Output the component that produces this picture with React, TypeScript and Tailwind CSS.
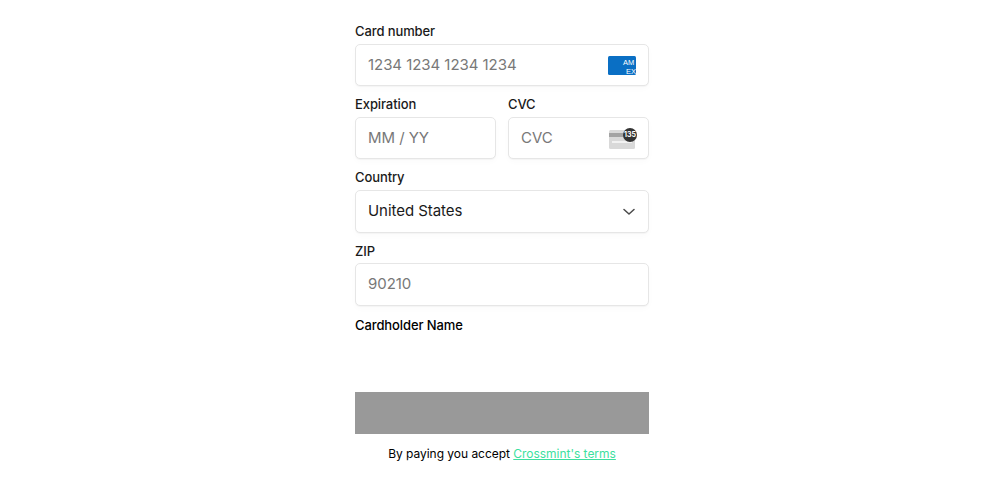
const inputClass =
  "flex items-center justify-between rounded-[5px] border border-[#e6e6e6] bg-white pl-3 pr-3 text-[15px] tracking-[-0.05px] shadow-[0_1px_1px_rgba(0,0,0,0.03),0_3px_6px_rgba(0,0,0,0.02)]";

function Label({ children }: { children: React.ReactNode }) {
  return <div className="mb-[4px] h-[21px] pt-[4px] text-[13px] font-[450] leading-[16px] tracking-[-0.1px] text-[#1a1a1a]">{children}</div>;
}

function AmexIcon() {
  return (
    <svg width="28" height="19" viewBox="0 0 28 19">
      <rect width="28" height="19" rx="1.5" fill="#0a6fc4" />
      <text x="15" y="9" fontSize="7.5" fill="#fff" fontFamily="Liberation Sans, sans-serif">AM</text>
      <text x="18" y="17.5" fontSize="7.5" fill="#fff" fontFamily="Liberation Sans, sans-serif">EX</text>
    </svg>
  );
}

function CvcIcon() {
  return (
    <div className="relative h-[21px] w-[28px]">
      <svg width="26" height="19" viewBox="0 0 26 19" className="absolute bottom-0 left-0">
        <rect width="26" height="19" rx="1.5" fill="#d9d9d9" />
        <rect y="3" width="26" height="4" fill="#a3a3a3" />
        <rect x="3" y="11" width="20" height="2" fill="#f2f2f2" />
      </svg>
      <div className="absolute right-0 top-0 flex h-[14px] w-[14px] items-center justify-center rounded-full bg-[#333] text-[7px] font-bold leading-none tracking-normal text-white">
        135
      </div>
    </div>
  );
}

export default function App() {
  return (
    <div className="flex h-[483px] w-[1000px] justify-center bg-white pl-[4px] font-['Inter',sans-serif]">
      <div className="w-[294px] pt-[19px]">
        <Label>Card number</Label>
        <div className={`${inputClass} h-[42px]`}>
          <span className="text-[#787878]">1234 1234 1234 1234</span>
          <AmexIcon />
        </div>

        <div className="mt-[6px] grid grid-cols-[141px_141px] gap-x-3">
          <div>
            <Label>Expiration</Label>
            <div className={`${inputClass} h-[42px]`}>
              <span className="text-[#787878]">MM / YY</span>
            </div>
          </div>
          <div>
            <Label>CVC</Label>
            <div className={`${inputClass} h-[42px]`}>
              <span className="text-[#787878]">CVC</span>
              <div className="-mr-[1px]"><CvcIcon /></div>
            </div>
          </div>
        </div>

        <div className="mt-[6px]">
          <Label>Country</Label>
          <div className={`${inputClass} h-[43px]`}>
            <span className="text-[#1a1a1a]">United States</span>
            <svg width="12" height="8" viewBox="0 0 12 8" fill="none" stroke="#4a4a4a" strokeWidth="1.5" strokeLinecap="round" strokeLinejoin="round" className="mr-[1px] mt-[1px]">
              <path d="M1 1.5 L6 6 L11 1.5" />
            </svg>
          </div>
        </div>

        <div className="mt-[6px]">
          <Label>ZIP</Label>
          <div className={`${inputClass} -mt-[1px] h-[43px]`}>
            <span className="text-[#787878]">90210</span>
          </div>
        </div>

        <div className="mt-[11px] text-[13px] font-medium leading-[16px] tracking-[-0.1px] text-black">Cardholder Name</div>

        <div className="mt-[59px] h-[42px] bg-[#999999]" />

        <div className="mt-[12px] text-center text-[12px] leading-[16px] tracking-[-0.03px] text-black">
          By paying you accept{" "}
          <a className="text-[#3ddf9e] underline">Crossmint's terms</a>
        </div>
      </div>
    </div>
  );
}
